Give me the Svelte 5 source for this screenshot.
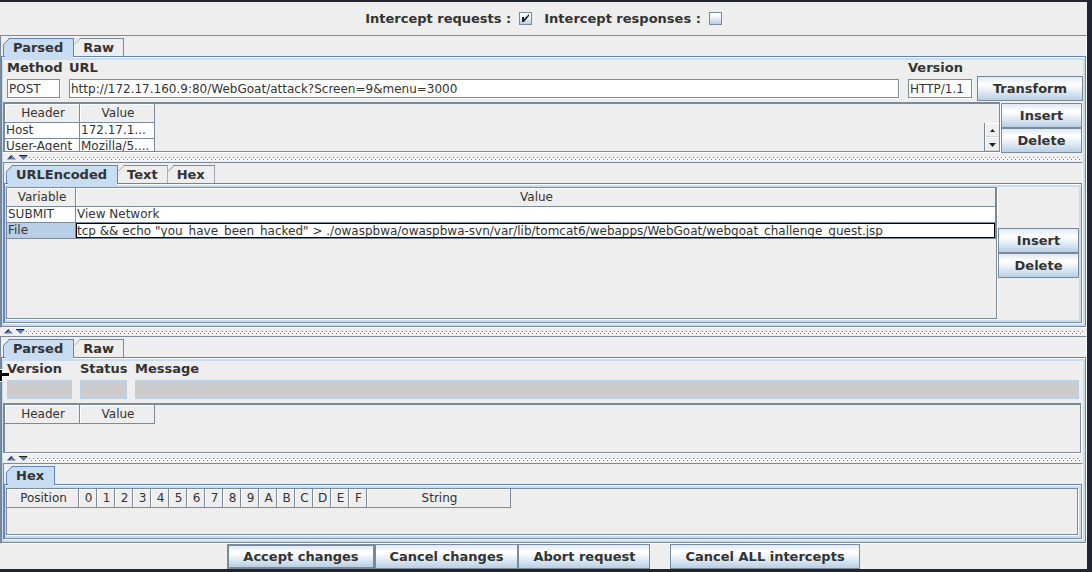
<script>
  let interceptRequests = $state(true);
  let interceptResponses = $state(false);
  let method = $state('POST');
  let url = $state('http://172.17.160.9:80/WebGoat/attack?Screen=9&menu=3000');
  let version = $state('HTTP/1.1');
  let fileValue = $state('tcp && echo "you_have_been_hacked" > ./owaspbwa/owaspbwa-svn/var/lib/tomcat6/webapps/WebGoat/webgoat_challenge_guest.jsp');

  const headers = [
    ['Host', '172.17.1...'],
    ['User-Agent', 'Mozilla/5....']
  ];
  const hexColumns = '0123456789ABCDEF'.split('');
</script>

{#snippet tabs(names)}
  <div class="tabs" role="tablist">
    {#each names as name, i}
      <button class="tab" class:active={i === 0} role="tab" aria-selected={i === 0}>
        <svg class="corner" width="7" height="19" viewBox="0 0 7 19" aria-hidden="true">
          {#if i === 0}
            <path d="M.5 19V6.5L6.5.5" />
          {:else}
            <path d="M0 6.5L6.5 0" />
          {/if}
        </svg>{name}
      </button>
    {/each}
  </div>
{/snippet}

{#snippet divider()}
  <div class="divider" role="separator">
    <svg width="21" height="5" viewBox="0 0 21 5" aria-hidden="true">
      <path d="M0 4.5L4.5 0L9 4.5Z" fill="#5b79bd" />
      <path d="M2 2.5L4.5 0L5 1L3 3L0 4.5Z" fill="#222" />
      <path d="M12 .5H21L16.5 5Z" fill="#5b79bd" />
      <path d="M12 0H20V1H12Z" fill="#222" />
    </svg>
    <span class="bumps"></span>
  </div>
{/snippet}

<main class="window">
  <div class="toggles">
    <label>Intercept requests : <input type="checkbox" bind:checked={interceptRequests} /></label>
    <label>Intercept responses : <input type="checkbox" bind:checked={interceptResponses} /></label>
  </div>

  <section class="tabbed grow">
    {@render tabs(['Parsed', 'Raw'])}
    <div class="pane">
      <div class="request-line">
        <div class="fields request-fields">
          <div class="field"><label for="method">Method</label><input id="method" type="text" bind:value={method} /></div>
          <div class="field"><label for="url">URL</label><input id="url" type="text" bind:value={url} /></div>
          <div class="field"><label for="version">Version</label><input id="version" type="text" bind:value={version} /></div>
        </div>
        <button class="btn">Transform</button>
      </div>
      <div class="header-area">
        <div class="viewport thick short with-scroll">
          <table class="headers">
            <thead><tr><th>Header</th><th>Value</th></tr></thead>
            <tbody>
              {#each headers as [name, value]}
                <tr><td>{name}</td><td>{value}</td></tr>
              {/each}
            </tbody>
          </table>
          <div class="scroll">
            <button aria-label="Scroll up"><svg width="5" height="3" viewBox="0 0 5 3"><path d="M0 3L2.5 0L5 3Z" /></svg></button>
            <button aria-label="Scroll down"><svg width="7" height="4" viewBox="0 0 7 4"><path d="M0 0H7L3.5 4Z" /></svg></button>
          </div>
        </div>
        <div class="side">
          <button class="btn">Insert</button>
          <button class="btn">Delete</button>
        </div>
      </div>
      {@render divider()}
      <section class="tabbed grow">
        {@render tabs(['URLEncoded', 'Text', 'Hex'])}
        <div class="pane row">
          <div class="viewport tall">
            <table class="variables">
              <thead><tr><th class="name">Variable</th><th>Value</th></tr></thead>
              <tbody>
                <tr><td>SUBMIT</td><td>View Network</td></tr>
                <tr>
                  <td class="selected"><label for="file-value">File</label></td>
                  <td class="editing"><input id="file-value" type="text" bind:value={fileValue} /></td>
                </tr>
              </tbody>
            </table>
          </div>
          <div class="side centered">
            <button class="btn">Insert</button>
            <button class="btn">Delete</button>
          </div>
        </div>
      </section>
    </div>
  </section>

  {@render divider()}

  <section class="tabbed">
    {@render tabs(['Parsed', 'Raw'])}
    <div class="pane">
      <div class="fields response-fields">
        <div class="field"><label for="r-version">Version</label><input id="r-version" type="text" disabled /></div>
        <div class="field"><label for="r-status">Status</label><input id="r-status" type="text" disabled /></div>
        <div class="field"><label for="r-message">Message</label><input id="r-message" type="text" disabled /></div>
      </div>
      <div class="header-area">
        <div class="viewport thick short">
          <table class="headers">
            <thead><tr><th>Header</th><th>Value</th></tr></thead>
          </table>
        </div>
      </div>
      {@render divider()}
      <section class="tabbed">
        {@render tabs(['Hex'])}
        <div class="pane row">
          <div class="viewport hex-view">
            <table class="hex">
              <thead>
                <tr>
                  <th class="position">Position</th>
                  {#each hexColumns as c}<th class="digit">{c}</th>{/each}
                  <th class="string">String</th>
                </tr>
              </thead>
            </table>
          </div>
        </div>
      </section>
    </div>
    <svg class="pointer" width="10" height="14" viewBox="0 0 10 14" aria-hidden="true">
      <path d="M0 1H3V5H10V9H3V14H0Z" fill="#fff" />
      <path d="M0 2H2V5H9V8H2V13H0Z" fill="#000" />
    </svg>
  </section>

  <footer class="actions">
    <button class="btn default">Accept changes</button>
    <button class="btn">Cancel changes</button>
    <button class="btn">Abort request</button>
    <button class="btn apart">Cancel ALL intercepts</button>
  </footer>
</main>

<style>
  :global(body) {
    background: #22252e;
  }

  .window {
    --line: #7a8a99;
    --blue: #6382bf;
    --light: #c8ddf2;
    --face: #eeeeee;
    box-sizing: border-box;
    display: flex;
    flex-direction: column;
    min-height: 100vh;
    border: solid #22252e;
    border-width: 2px 5px 3px 0;
    background: var(--face);
    color: #333;
    font: 12px/15px 'DejaVu Sans', sans-serif;
  }

  .window * {
    box-sizing: border-box;
  }

  button,
  input {
    margin: 0;
    color: inherit;
    font: inherit;
  }

  .toggles,
  .tab,
  .field label,
  .btn {
    font-size: 13px;
    font-weight: bold;
    white-space: nowrap;
  }

  .toggles {
    display: flex;
    justify-content: center;
    align-items: center;
    gap: 12px;
    height: 33px;
  }

  .toggles label {
    display: flex;
    align-items: center;
    gap: 8px;
  }

  .toggles input {
    appearance: none;
    width: 13px;
    height: 13px;
    border: 1px solid var(--line);
    background: linear-gradient(#fff, #fff 20%, #b8cfe5);
  }

  .toggles input:checked {
    background:
      url("data:image/svg+xml,%3Csvg xmlns='http://www.w3.org/2000/svg' width='11' height='11' viewBox='0 0 11 11'%3E%3Cpath d='M2 4h2v2L9 1v2L4 9H2z' fill='%23222'/%3E%3C/svg%3E") no-repeat,
      linear-gradient(#fff, #fff 20%, #b8cfe5);
  }

  .tabbed {
    position: relative;
    display: flex;
    flex-direction: column;
    border: 1px solid var(--line);
    border-right-color: #fff;
    border-bottom-color: #fff;
  }

  .grow {
    flex: 1 0 auto;
  }

  .tabs {
    display: flex;
    height: 20px;
    padding: 2px 0 0 2px;
  }

  .tab {
    position: relative;
    height: 18px;
    padding: 1px 9px;
    border: 0 solid var(--line);
    border-width: 1px 1px 0 0;
    background: none;
    clip-path: polygon(6px 0, 100% 0, 100% 21px, 0 21px, 0 6px);
    line-height: 15px;
  }

  .tab.active {
    z-index: 1;
    padding-right: 10px;
    padding-left: 10px;
    border-color: var(--blue);
    background: var(--light);
  }

  .tab.active::after {
    position: absolute;
    inset: 100% 0 -3px 2px;
    background: var(--light);
    content: '';
  }

  .corner {
    position: absolute;
    top: -1px;
    left: 0;
    fill: none;
    stroke: var(--line);
  }

  .active .corner {
    stroke: var(--blue);
  }

  .pane {
    display: flex;
    flex: 1 0 auto;
    flex-direction: column;
    padding: 3px 2px 2px 1px;
    border: 1px solid var(--line);
    border-top-color: var(--blue);
    border-left-color: var(--blue);
    background:
      linear-gradient(#fff, #fff) top / 100% 1px no-repeat,
      linear-gradient(var(--face), var(--face)) content-box,
      var(--light);
  }

  .pane.row {
    flex-direction: row;
  }

  .request-line {
    display: flex;
    gap: 5px;
    align-items: flex-start;
  }

  .request-line .btn {
    width: 106px;
    margin-top: 16px;
    padding: 0;
  }

  .fields {
    display: grid;
    flex: 1;
    height: 42px;
    padding: 0 0 0 4px;
  }

  .request-fields {
    grid-template-columns: 53px 1fr 64px;
    column-gap: 9px;
  }

  .response-fields {
    flex: none;
    grid-template-columns: 65px 47px 1fr;
    column-gap: 8px;
    padding-right: 4px;
  }

  .field {
    display: flex;
    flex-direction: column;
    gap: 4px;
    min-width: 0;
  }

  .field input {
    width: 100%;
    height: 19px;
    padding: 0 1px;
    border: 1px solid var(--line);
    background: #fff;
    box-shadow: 1px 1px #fff;
  }

  .field input:disabled {
    border-color: #b8cfe5;
    background: #ccc;
    box-shadow: none;
  }

  .btn {
    height: 25px;
    padding: 0 14px;
    border: 1px solid var(--line);
    background: linear-gradient(#dde8f3, #fff 30%, #fff 35%, #b8cfe5);
  }

  .header-area {
    display: flex;
    margin-bottom: 1px;
    padding-right: 1px;
  }

  .side {
    display: flex;
    flex-direction: column;
    padding-top: 1px;
  }

  .side .btn {
    width: 81px;
    padding: 0;
  }

  .side.centered {
    justify-content: center;
    padding: 0 0 2px;
  }

  .viewport {
    display: flex;
    flex: 1;
    align-items: flex-start;
    margin: 0 1px 1px 0;
    overflow: hidden;
    border: 1px solid var(--line);
    box-shadow: 1px 1px #fff;
  }

  .thick {
    border-width: 2px 1px 1px 2px;
  }

  .short {
    height: 50px;
  }

  .with-scroll {
    justify-content: space-between;
  }

  .tall {
    min-height: 132px;
  }

  .hex-view {
    min-height: 47px;
  }

  table {
    border-spacing: 0;
    table-layout: fixed;
  }

  th {
    height: 19px;
    padding: 1px 0 0 2px;
    border: solid var(--line);
    border-width: 0 1px 1px 0;
    box-shadow: inset 1px 1px #fff;
    font-weight: normal;
    line-height: 15px;
  }

  td {
    height: 16px;
    padding: 0 1px;
    border: solid var(--line);
    border-width: 0 1px 1px 0;
    background: #fff;
    line-height: 15px;
    white-space: nowrap;
  }

  .headers {
    width: 150px;
  }

  .variables {
    width: 100%;
  }

  .name {
    width: 69px;
  }

  .selected {
    background: #b8cfe5;
  }

  .editing {
    padding: 0;
  }

  .editing input {
    display: block;
    width: 100%;
    height: 15px;
    padding: 0;
    border: 1px solid #000;
    background: #fff;
    outline: 0;
    line-height: 13px;
  }

  .hex {
    width: 504px;
  }

  .position {
    width: 72px;
  }

  .digit {
    width: 18px;
  }

  .scroll {
    align-self: flex-end;
    width: 15px;
    border-left: 1px solid var(--line);
    background: var(--face);
  }

  .scroll button {
    display: flex;
    justify-content: center;
    align-items: center;
    width: 14px;
    height: 14px;
    padding: 0;
    border: 0 solid #fff;
    border-width: 1px 0 0 1px;
    background: var(--face);
    box-shadow: inset 0 -1px #ccd3da;
    fill: #222;
  }

  .divider {
    display: flex;
    gap: 1px;
    height: 8px;
    padding: 1px 3px 0 4px;
  }

  .bumps {
    flex: 1;
    height: 4px;
    margin-top: 2px;
    background: url("data:image/svg+xml,%3Csvg xmlns='http://www.w3.org/2000/svg' width='4' height='4'%3E%3Cpath d='M0 0h4v4H0z' fill='%23f5f5f5'/%3E%3Cpath d='M0 0h1v1H0zM2 2h1v1H2z' fill='%236f7f8e'/%3E%3C/svg%3E");
  }

  .pointer {
    position: absolute;
    top: 31px;
    left: -1px;
  }

  .actions {
    display: flex;
    justify-content: center;
  }

  .default {
    border-width: 2px;
  }

  .apart {
    margin-left: 20px;
  }
</style>
